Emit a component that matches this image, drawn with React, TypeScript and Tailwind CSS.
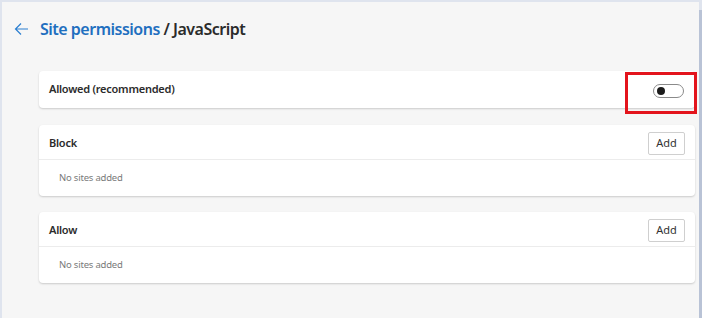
import React from "react";

function Toggle() {
  return (
    <div className="w-[31px] h-[14px] rounded-full border border-[#8a8a8a] bg-white flex items-center px-[3px]">
      <div className="w-[8px] h-[8px] rounded-full bg-[#1b1b1b]" />
    </div>
  );
}

function SiteList({ title }: { title: string }) {
  return (
    <div className="bg-white rounded-[4px] shadow-[0_1px_2px_rgba(0,0,0,0.18)] mr-[4px]">
      <div className="h-[35px] flex items-center justify-between pl-[10px] pr-[10px] border-b border-[#ececec]">
        <span className="text-[11px] font-semibold tracking-[-0.25px] text-[#2b2b2b] pt-[2px]">{title}</span>
        <button className="h-[23px] w-[37px] mt-[2px] border border-[#cfcfcf] rounded-[2px] bg-white text-[11px] text-[#333] flex items-center justify-center">
          Add
        </button>
      </div>
      <div className="h-[36px] flex items-center pl-[20px]">
        <span className="text-[9.5px] tracking-[-0.2px] text-[#7a7a7a]">No sites added</span>
      </div>
    </div>
  );
}

export default function App() {
  return (
    <div
      className="w-[702px] h-[318px] bg-[#f6f6f6] border-t-[2px] border-l-[2px] border-[#dfe4ee] flex overflow-hidden"
      style={{ fontFamily: '"Segoe UI", "Noto Sans", "Open Sans", sans-serif' }}
    >
      <div className="flex-1 flex flex-col">
        <div className="h-[54px] flex items-center pl-[12px]">
          <svg width="15" height="14" viewBox="0 0 15 14" className="mr-[11px]">
            <path d="M14 7H1.8M7 1.5L1.5 7L7 12.5" fill="none" stroke="#2b7fd0" strokeWidth="1.2" />
          </svg>
          <span className="text-[16px] font-semibold text-[#1f6fbf] tracking-[-0.5px]">Site permissions</span>
          <span className="text-[16px] font-semibold text-[#2b2b2b] tracking-[-0.5px] whitespace-pre"> / JavaScript</span>
        </div>
        <div className="flex flex-col pl-[37px] pt-[15px]">
          <div className="relative bg-white rounded-[4px] shadow-[0_1px_2px_rgba(0,0,0,0.18)] h-[37px] flex items-center justify-between pl-[10px] pr-[11px] mr-[4px]">
            <span className="text-[11px] font-semibold tracking-[-0.25px] text-[#2b2b2b]">Allowed (recommended)</span>
            <div className="mt-[2px]">
              <Toggle />
            </div>
            <div className="absolute left-[586px] top-[1px] w-[72px] h-[42px] border-[3px] border-[#e3141c]" />
          </div>
          <div className="mt-[17px]">
            <SiteList title="Block" />
          </div>
          <div className="mt-[16px]">
            <SiteList title="Allow" />
          </div>
        </div>
      </div>
      <div className="w-[3px] flex flex-col">
        <div className="h-[8px] bg-[#dfe4ee]" />
        <div className="flex-1 bg-[#b9c3d6]" />
      </div>
    </div>
  );
}
